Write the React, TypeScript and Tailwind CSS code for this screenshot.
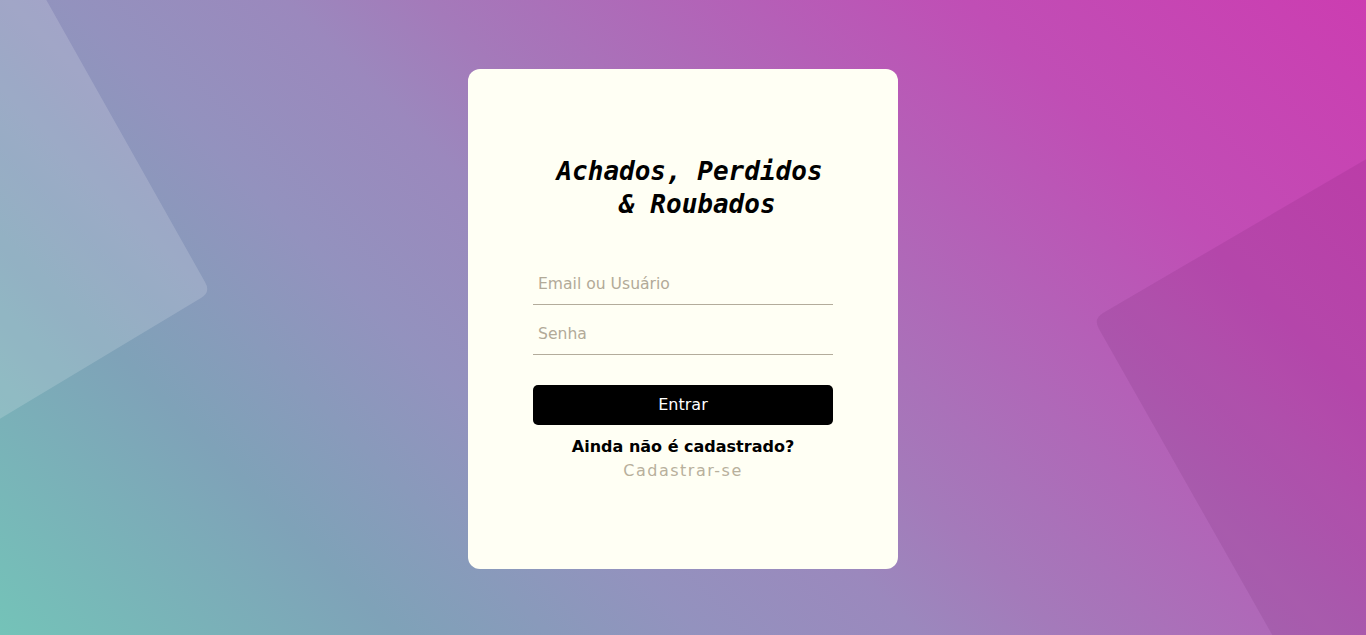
import React from 'react';

const Backdrop = () => (
  <svg className="pointer-events-none absolute inset-0 h-full w-full" viewBox="0 0 1366 635" preserveAspectRatio="none">
    <path d="M -181 -404 L 205 282 Q 211 292 201 298 L -217 549 Z" fill="rgba(255,255,255,0.16)" />
    <path d="M 1611 16 L 1103 313 Q 1093 319 1099 329 L 1389 841 L 1800 841 L 1800 16 Z" fill="rgba(70,0,70,0.09)" />
  </svg>
);

export default function App() {
  return (
    <div className="relative flex h-[635px] w-full items-center justify-center overflow-hidden bg-[linear-gradient(45deg,#74c3b8_0%,#7fa2b8_20%,#9392be_35%,#9b88bd_46%,#a47aba_53%,#c04eb5_80%,#cc3db1_100%)] pt-[2px] font-['DejaVu_Sans',sans-serif]">
      <Backdrop />
      <div className="relative flex h-[500px] w-[430px] flex-col items-center justify-center rounded-[12px] bg-[#fffff4]">
        <h1 className="pl-[13px] text-center font-['DejaVu_Sans_Mono',monospace] text-[26px] leading-[33px] font-bold text-black italic">
          Achados, Perdidos
          <br />
          {'\u00a0'}& Roubados
        </h1>

        <form className="mt-[44px] flex w-[300px] flex-col gap-[10px]" onSubmit={(e) => e.preventDefault()}>
          <input
            type="text"
            placeholder="Email ou Usuário"
            className="h-[40px] w-full border-b border-[#b3ac9b] bg-transparent px-[5px] text-[15.6px] text-black outline-none placeholder:text-[#b2aa98]"
          />
          <input
            type="password"
            placeholder="Senha"
            className="h-[40px] w-full border-b border-[#b3ac9b] bg-transparent px-[5px] text-[15.6px] text-black outline-none placeholder:text-[#b2aa98]"
          />
          <button type="submit" className="mt-[20px] h-[40px] w-full rounded-[5px] bg-black text-[16px] text-white">
            Entrar
          </button>
        </form>

        <p className="mt-[10px] text-[16px] leading-[24px] font-bold text-black">Ainda não é cadastrado?</p>
        <a href="#" className="text-[16px] leading-[24px] tracking-[1.5px] text-[#b8b09c]">
          Cadastrar-se
        </a>
      </div>
    </div>
  );
}
